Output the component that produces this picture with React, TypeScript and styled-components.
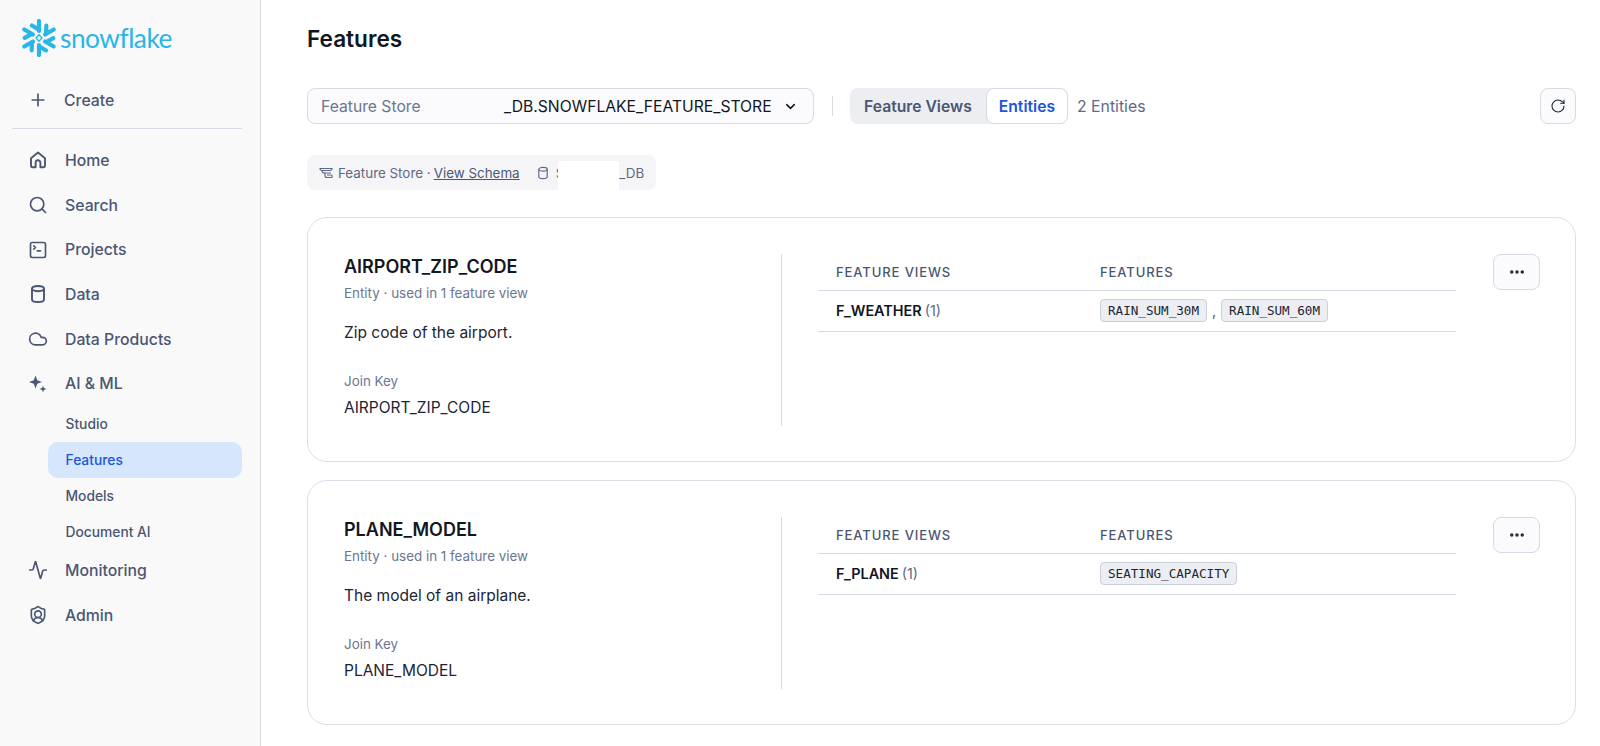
import React from "react";
import styled, { createGlobalStyle } from "styled-components";
import {
  Activity,
  ChevronDown,
  Cloud,
  Ellipsis,
  Plus,
  RotateCw,
  Search,
  ShieldUser,
  SquareTerminal
} from "lucide-react";

const GlobalStyle = createGlobalStyle`
  html, body {
    margin: 0;
    padding: 0;
    height: 100%;
    background: #fff;
    font-family: Inter, "Liberation Sans", sans-serif;
    overflow: hidden;
  }
  * { box-sizing: border-box; }
`;

const Page = styled.div`
  display: flex;
  width: 1600px;
  height: 746px;
`;

const Sidebar = styled.aside`
  width: 261px;
  flex: none;
  background: #f9f9fa;
  border-right: 1px solid #d5dae4;
  padding: 19px 18px 0 12px;
`;

const Logo = styled.div`
  display: flex;
  align-items: center;
  gap: 2px;
  padding-left: 8px;
  height: 37px;
  color: #29b5e8;
  font-family: Lato, sans-serif;
  font-weight: 400;
  font-size: 26.3px;
  letter-spacing: -0.5px;
`;

const CreateRow = styled.div`
  display: flex;
  align-items: center;
  gap: 16px;
  padding-left: 16px;
  margin-top: 27px;
  height: 34px;
  color: #4a5672;
  font-size: 15.8px;
  font-weight: 500;
`;

const Divider = styled.div`
  height: 1px;
  background: #d5dae4;
  margin: 11px 0 9px;
`;

const NavRow = styled.div`
  display: flex;
  align-items: center;
  gap: 17px;
  padding-left: 16px;
  height: 44.7px;
  color: #4a5672;
  font-size: 15.8px;
  font-weight: 500;
`;

const SubNav = styled.div`
  display: flex;
  flex-direction: column;
  margin-bottom: -2px;
`;

const SubRow = styled.div<{ $active?: boolean }>`
  display: flex;
  align-items: center;
  height: 36px;
  margin-left: 36px;
  padding-left: 17.5px;
  border-radius: 10px;
  font-size: 13.8px;
  font-weight: 500;
  color: ${(p) => (p.$active ? "#1a56db" : "#4a5672")};
  background: ${(p) => (p.$active ? "#d6e6fd" : "transparent")};
`;

const Main = styled.main`
  flex: 1;
  min-width: 0;
  padding: 23px 24px 0 46px;
`;

const Title = styled.h1`
  margin: 0;
  font-size: 22.6px;
  line-height: 32px;
  font-weight: 600;
  color: #12161f;
`;

const Toolbar = styled.div`
  display: flex;
  align-items: center;
  height: 36px;
  margin-top: 33px;
`;

const StoreSelect = styled.div`
  display: flex;
  align-items: center;
  width: 507px;
  height: 36px;
  padding: 0 15px 0 13px;
  background: #fbfbfd;
  border: 1px solid #d5dae4;
  border-radius: 8px;
  font-size: 15.7px;
  color: #12161f;
`;

const SelectLabel = styled.span`
  color: #6b7690;
  width: 183px;
`;

const SelectValue = styled.span`
  flex: 1;
`;

const ToolbarSeparator = styled.div`
  width: 1px;
  height: 20px;
  background: #d5dae4;
  margin: 0 17px 0 18px;
`;

const Segmented = styled.div`
  display: flex;
  height: 36px;
  background: #eceef2;
  border-radius: 8px;
`;

const Segment = styled.div<{ $active?: boolean }>`
  display: flex;
  align-items: center;
  padding: ${(p) => (p.$active ? "0 12px" : "0 14px")};
  font-size: 15.7px;
  font-weight: 600;
  border-radius: 8px;
  color: ${(p) => (p.$active ? "#1a56db" : "#4a5672")};
  background: ${(p) => (p.$active ? "#fff" : "transparent")};
  border: ${(p) => (p.$active ? "1px solid #d5dae4" : "none")};
`;

const Count = styled.span`
  margin-left: 9px;
  font-size: 15.8px;
  color: #5e6a85;
`;

const IconButton = styled.button<{ $wide?: boolean }>`
  display: flex;
  align-items: center;
  justify-content: center;
  flex: none;
  width: ${(p) => (p.$wide ? "47px" : "36px")};
  height: 36px;
  padding: 0;
  margin-left: ${(p) => (p.$wide ? "0" : "auto")};
  background: #fbfbfd;
  border: 1px solid #d5dae4;
  border-radius: 8px;
  color: #1d2433;
`;

const Crumbs = styled.div`
  display: inline-flex;
  align-items: center;
  height: 35px;
  margin-top: 31px;
  padding: 0 12px 0 11px;
  background: #f5f5f7;
  border-radius: 8px;
  font-size: 13.4px;
  color: #5e6a85;
`;

const CrumbIcon = styled.svg`
  flex: none;
  margin-right: 4px;
`;

const SchemaLink = styled.a`
  color: #4a5672;
  text-decoration: underline;
  margin: 0 16px 0 3px;
`;

const RedactedStart = styled.span`
  margin-left: 6px;
`;

const Redacted = styled.span<{ $width: number; $height: number }>`
  display: inline-block;
  flex: none;
  width: ${(p) => p.$width}px;
  height: ${(p) => p.$height}px;
  margin-left: -6px;
  align-self: flex-end;
  background: #fff;
`;

const Cards = styled.div`
  display: flex;
  flex-direction: column;
  gap: 18px;
  margin-top: 27px;
`;

const Card = styled.section`
  display: flex;
  height: 245px;
  padding: 36px 37px 35px 36px;
  background: #fff;
  border: 1px solid #dcdfe8;
  border-radius: 20px;
`;

const EntityInfo = styled.div`
  width: 438px;
  flex: none;
  border-right: 1px solid #d5dae4;
`;

const EntityName = styled.h2`
  margin: 1px 0 0;
  font-size: 18px;
  line-height: 24px;
  font-weight: 600;
  color: #12161f;
`;

const Meta = styled.div`
  margin-top: 5px;
  font-size: 13.4px;
  line-height: 18px;
  color: #6b7690;
`;

const Description = styled.p`
  margin: 20px 0 0;
  font-size: 15.5px;
  line-height: 22px;
  color: #1d2433;
`;

const KeyLabel = styled(Meta)`
  margin-top: 28px;
`;

const KeyValue = styled.div`
  margin-top: 7px;
  font-size: 15.5px;
  line-height: 22px;
  color: #1d2433;
`;

const ViewsTable = styled.div`
  width: 638px;
  flex: none;
  margin: 0 37px 0 36px;
`;

const TableRow = styled.div<{ $header?: boolean }>`
  display: grid;
  grid-template-columns: 264px 1fr;
  align-items: center;
  padding: 0 0 1px 18px;
  height: ${(p) => (p.$header ? "37px" : "41px")};
  border-bottom: 1px solid #d5dae4;
`;

const HeaderCell = styled.div`
  font-size: 13px;
  font-weight: 500;
  letter-spacing: 0.9px;
  color: #4a5672;
`;

const ViewName = styled.div`
  font-size: 14.4px;
  font-weight: 600;
  color: #12161f;
`;

const ViewCount = styled.span`
  margin-left: 3px;
  font-weight: 400;
  color: #5e6a85;
`;

const TagList = styled.div`
  display: flex;
  align-items: center;
  gap: 5px;
  color: #4a5672;
  font-size: 14px;
`;

const Tag = styled.span`
  display: inline-block;
  height: 23px;
  padding: 0 7px;
  line-height: 21px;
  font-family: "DejaVu Sans Mono", "Liberation Mono", monospace;
  font-size: 12.6px;
  color: #1d2433;
  background: #eceef2;
  border: 1px solid #c9cfdc;
  border-radius: 4px;
`;

const SnowflakeLogo = () => (
  <svg width="38" height="38" viewBox="-19 -19 38 38" fill="none">
    {[0, 60, 120, 180, 240, 300].map((deg) => (
      <g key={deg} transform={`rotate(${deg})`}>
        <path
          d="M0 -7 L0 -17 M-0.5 -8.5 L-7 -12.5"
          stroke="#29b5e8"
          strokeWidth="4.2"
          strokeLinecap="round"
        />
      </g>
    ))}
    <path d="M0 -3.2 L3 0 L0 3.2 L-3 0 Z" stroke="#29b5e8" strokeWidth="1.4" />
  </svg>
);

const StoreIcon = () => (
  <CrumbIcon width="16" height="16" viewBox="0 0 16 16" fill="none" stroke="#5e6a85" strokeWidth="1.2">
    <path d="M2 3.5h12a2 2 0 0 1-2 2H4a2 2 0 0 1-2-2Z" />
    <path d="M4 5.5c0 2 1 2.5 3 2.5h6M7 8v2.5c0 1 .6 2 2 2h4a1.2 1.2 0 0 0 0-2.5H9" />
  </CrumbIcon>
);

const HomeIcon = () => (
  <svg width="20" height="20" viewBox="0 0 20 20" fill="none" stroke="currentColor" strokeWidth="1.9" strokeLinejoin="round">
    <path d="M3 8.2 10 2.6l7 5.6v7.6a1.4 1.4 0 0 1-1.4 1.4h-3.2v-4.5a2.4 2.4 0 0 0-4.8 0v4.5H4.4A1.4 1.4 0 0 1 3 15.8Z" />
  </svg>
);

const DataIcon = ({ size = 20, weight = 1.9 }: { size?: number; weight?: number }) => (
  <svg width={size} height={size} viewBox="0 0 20 20" fill="none" stroke="currentColor" strokeWidth={weight}>
    <ellipse cx="10" cy="4.6" rx="6" ry="2.6" />
    <path d="M4 4.6v10.8c0 1.5 2.7 2.6 6 2.6s6-1.1 6-2.6V4.6" />
  </svg>
);

const SparkIcon = () => (
  <svg width="20" height="20" viewBox="0 0 20 20" fill="currentColor">
    <path d="M7.5 1.5 9.2 6.3 14 8 9.2 9.7 7.5 14.5 5.8 9.7 1 8l4.8-1.7Z" />
    <path d="M15 11.5l.9 2.6 2.6.9-2.6.9-.9 2.6-.9-2.6-2.6-.9 2.6-.9Z" />
  </svg>
);

const navIconProps = { size: 20, strokeWidth: 2 };

type Entity = {
  name: string;
  description: string;
  view: string;
  features: string[];
};

const entities: Entity[] = [
  {
    name: "AIRPORT_ZIP_CODE",
    description: "Zip code of the airport.",
    view: "F_WEATHER",
    features: ["RAIN_SUM_30M", "RAIN_SUM_60M"]
  },
  {
    name: "PLANE_MODEL",
    description: "The model of an airplane.",
    view: "F_PLANE",
    features: ["SEATING_CAPACITY"]
  }
];

const EntityCard = ({ entity }: { entity: Entity }) => (
  <Card>
    <EntityInfo>
      <EntityName>{entity.name}</EntityName>
      <Meta>Entity · used in 1 feature view</Meta>
      <Description>{entity.description}</Description>
      <KeyLabel>Join Key</KeyLabel>
      <KeyValue>{entity.name}</KeyValue>
    </EntityInfo>
    <ViewsTable>
      <TableRow $header>
        <HeaderCell>FEATURE VIEWS</HeaderCell>
        <HeaderCell>FEATURES</HeaderCell>
      </TableRow>
      <TableRow>
        <ViewName>
          {entity.view}
          <ViewCount>(1)</ViewCount>
        </ViewName>
        <TagList>
          {entity.features.map((feature, i) => (
            <React.Fragment key={feature}>
              {i > 0 && <span>,</span>}
              <Tag>{feature}</Tag>
            </React.Fragment>
          ))}
        </TagList>
      </TableRow>
    </ViewsTable>
    <IconButton $wide>
      <Ellipsis size={18} strokeWidth={2.6} />
    </IconButton>
  </Card>
);

export default function App() {
  return (
    <Page>
      <GlobalStyle />
      <Sidebar>
        <Logo>
          <SnowflakeLogo />
          <span>snowflake</span>
        </Logo>
        <CreateRow>
          <Plus {...navIconProps} />
          Create
        </CreateRow>
        <Divider />
        <NavRow><HomeIcon />Home</NavRow>
        <NavRow><Search {...navIconProps} />Search</NavRow>
        <NavRow><SquareTerminal {...navIconProps} />Projects</NavRow>
        <NavRow><DataIcon />Data</NavRow>
        <NavRow><Cloud {...navIconProps} />Data Products</NavRow>
        <NavRow><SparkIcon />AI &amp; ML</NavRow>
        <SubNav>
          <SubRow>Studio</SubRow>
          <SubRow $active>Features</SubRow>
          <SubRow>Models</SubRow>
          <SubRow>Document AI</SubRow>
        </SubNav>
        <NavRow><Activity {...navIconProps} />Monitoring</NavRow>
        <NavRow><ShieldUser {...navIconProps} />Admin</NavRow>
      </Sidebar>
      <Main>
        <Title>Features</Title>
        <Toolbar>
          <StoreSelect>
            <SelectLabel>Feature Store</SelectLabel>
            <SelectValue>_DB.SNOWFLAKE_FEATURE_STORE</SelectValue>
            <ChevronDown size={15} strokeWidth={2.4} />
          </StoreSelect>
          <ToolbarSeparator />
          <Segmented>
            <Segment>Feature Views</Segment>
            <Segment $active>Entities</Segment>
          </Segmented>
          <Count>2 Entities</Count>
          <IconButton>
            <RotateCw size={16} strokeWidth={1.6} />
          </IconButton>
        </Toolbar>
        <Crumbs>
          <StoreIcon />
          Feature Store ·
          <SchemaLink>View Schema</SchemaLink>
          <DataIcon size={14} weight={1.7} />
          <RedactedStart>S</RedactedStart>
          <Redacted $width={61} $height={29} />
          _DB
        </Crumbs>
        <Cards>
          {entities.map((entity) => (
            <EntityCard key={entity.name} entity={entity} />
          ))}
        </Cards>
      </Main>
    </Page>
  );
}
